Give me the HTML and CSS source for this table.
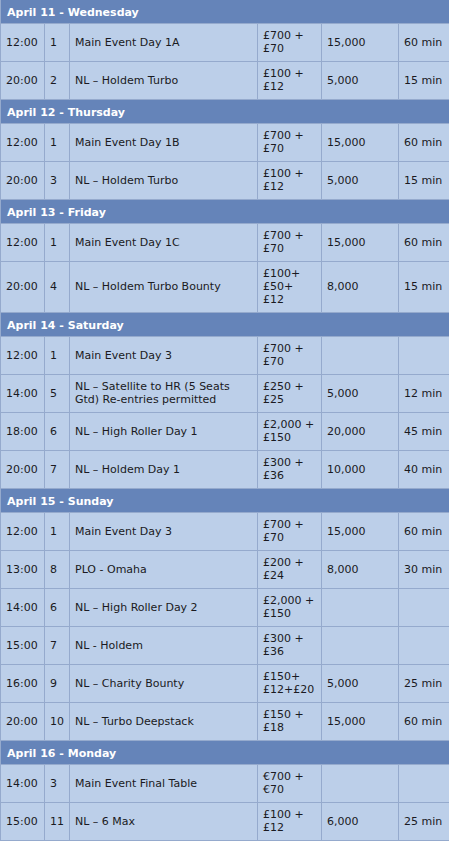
FILE: index.html
```html
<!DOCTYPE html>
<html>
<head>
<meta charset="utf-8">
<link rel="stylesheet" href="styles.css">
</head>
<body>
<table class="schedule">
<colgroup>
<col class="c-time"><col class="c-num"><col class="c-event"><col class="c-buyin"><col class="c-stack"><col class="c-level">
</colgroup>
<tbody>
<tr><th colspan="6" class="day">April 11 - Wednesday</th></tr>
<tr><td>12:00</td><td>1</td><td>Main Event Day 1A</td><td>£700 +<br>£70</td><td>15,000</td><td>60 min</td></tr>
<tr><td>20:00</td><td>2</td><td>NL – Holdem Turbo</td><td>£100 +<br>£12</td><td>5,000</td><td>15 min</td></tr>
<tr><th colspan="6" class="day">April 12 - Thursday</th></tr>
<tr><td>12:00</td><td>1</td><td>Main Event Day 1B</td><td>£700 +<br>£70</td><td>15,000</td><td>60 min</td></tr>
<tr><td>20:00</td><td>3</td><td>NL – Holdem Turbo</td><td>£100 +<br>£12</td><td>5,000</td><td>15 min</td></tr>
<tr><th colspan="6" class="day">April 13 - Friday</th></tr>
<tr><td>12:00</td><td>1</td><td>Main Event Day 1C</td><td>£700 +<br>£70</td><td>15,000</td><td>60 min</td></tr>
<tr><td>20:00</td><td>4</td><td>NL – Holdem Turbo Bounty</td><td>£100+<br>£50+<br>£12</td><td>8,000</td><td>15 min</td></tr>
<tr><th colspan="6" class="day">April 14 - Saturday</th></tr>
<tr><td>12:00</td><td>1</td><td>Main Event Day 3</td><td>£700 +<br>£70</td><td></td><td></td></tr>
<tr><td>14:00</td><td>5</td><td>NL – Satellite to HR (5 Seats Gtd) Re-entries permitted</td><td>£250 +<br>£25</td><td>5,000</td><td>12 min</td></tr>
<tr><td>18:00</td><td>6</td><td>NL – High Roller Day 1</td><td>£2,000 +<br>£150</td><td>20,000</td><td>45 min</td></tr>
<tr><td>20:00</td><td>7</td><td>NL – Holdem Day 1</td><td>£300 +<br>£36</td><td>10,000</td><td>40 min</td></tr>
<tr><th colspan="6" class="day">April 15 - Sunday</th></tr>
<tr><td>12:00</td><td>1</td><td>Main Event Day 3</td><td>£700 +<br>£70</td><td>15,000</td><td>60 min</td></tr>
<tr><td>13:00</td><td>8</td><td>PLO - Omaha</td><td>£200 +<br>£24</td><td>8,000</td><td>30 min</td></tr>
<tr><td>14:00</td><td>6</td><td>NL – High Roller Day 2</td><td>£2,000 +<br>£150</td><td></td><td></td></tr>
<tr><td>15:00</td><td>7</td><td>NL - Holdem</td><td>£300 +<br>£36</td><td></td><td></td></tr>
<tr><td>16:00</td><td>9</td><td>NL – Charity Bounty</td><td>£150+<br>£12+£20</td><td>5,000</td><td>25 min</td></tr>
<tr><td>20:00</td><td>10</td><td>NL – Turbo Deepstack</td><td>£150 +<br>£18</td><td>15,000</td><td>60 min</td></tr>
<tr><th colspan="6" class="day">April 16 - Monday</th></tr>
<tr><td>14:00</td><td>3</td><td>Main Event Final Table</td><td>€700 +<br>€70</td><td></td><td></td></tr>
<tr><td>15:00</td><td>11</td><td>NL – 6 Max</td><td>£100 +<br>£12</td><td>6,000</td><td>25 min</td></tr>
</tbody>
</table>
</body>
</html>
```

FILE: styles.css
```css
html, body {
  margin: 0;
  padding: 0;
  overflow: hidden;
  background: #bccfe9;
}
.schedule {
  width: 451px;
  table-layout: fixed;
  border-collapse: separate;
  border-spacing: 1px;
  border: 0;
  margin: -1px 0 0 0;
  background: #95aacd;
  font-family: "DejaVu Sans", Verdana, sans-serif;
  font-size: 11px;
  line-height: 13px;
  color: #1a1a22;
}
.c-time { width: 43px; }
.c-num { width: 24px; }
.c-event { width: 187px; }
.c-buyin { width: 63px; }
.c-stack { width: 76px; }
.c-level { width: 51px; }
.schedule td {
  background: #bccfe9;
  padding: 5px 4px 6px 5px;
  vertical-align: middle;
  text-align: left;
}
.schedule .day {
  background: #6584b9;
  color: #ffffff;
  font-weight: bold;
  text-align: left;
  padding: 6px 6px 4px 6px;
}
```
